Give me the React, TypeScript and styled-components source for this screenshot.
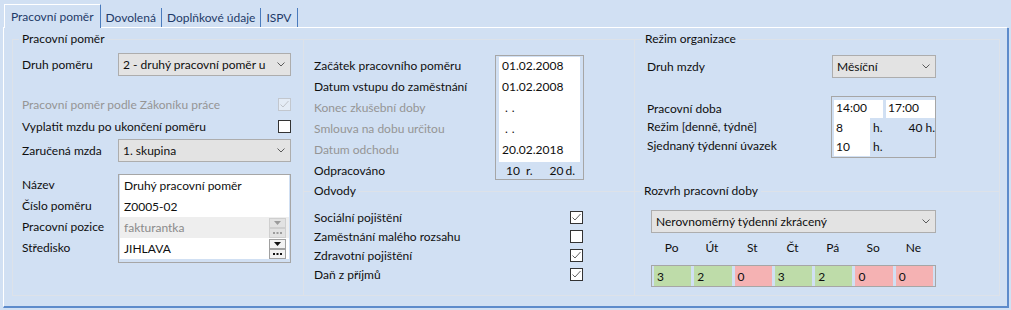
import styled, { createGlobalStyle } from 'styled-components';

const BG = '#d1e0f3';
const LINE = '#dde2e9';
const TAB_BLUE = '#4a7bbd';
const FRAME = '#a6a6a6';
const TEXT = '#0f0f0f';
const MUTED = '#959595';

const GlobalStyle = createGlobalStyle`
  html, body { margin: 0; padding: 0; }
  body {
    background: ${BG};
    font-family: Lato, 'Open Sans', sans-serif;
    font-size: 12px;
    color: ${TEXT};
  }
  * { box-sizing: border-box; }
`;

const Page = styled.div`
  width: 1011px;
  height: 310px;
  overflow: hidden;
  background: ${BG};
`;

const TabBar = styled.div`
  display: flex;
  align-items: flex-end;
  box-sizing: content-box;
  height: 27px;
  width: 1003px;
  margin-left: 3px;
  padding-left: 1px;
  border-bottom: 1px solid #fff;
`;

const Tab = styled.div<{ $active?: boolean }>`
  display: flex;
  align-items: center;
  box-sizing: content-box;
  height: ${(p) => (p.$active ? 23 : 19)}px;
  margin-bottom: ${(p) => (p.$active ? -1 : 0)}px;
  padding: 0 ${(p) => (p.$active ? 6 : 5)}px;
  color: #1e3a68;
  background: ${BG};
  border-right: 1px solid ${TAB_BLUE};
  border-top: ${(p) => (p.$active ? '1px solid #fff' : 'none')};
  border-left: ${(p) => (p.$active ? '1px solid #fff' : 'none')};
  white-space: nowrap;
`;

const Panel = styled.div`
  box-sizing: content-box;
  margin-left: 3px;
  width: 988px;
  height: 257px;
  padding: 11px 7px 10px 8px;
  border-left: 1px solid #fff;
  border-right: 2px solid #5d8bcb;
  border-bottom: 2px solid #5d8bcb;
  display: grid;
  grid-template-columns: 292px 331px 365px;
`;

const Column = styled.div`
  display: flex;
  flex-direction: column;
`;

const Group = styled.div<{ $h: number; $noLeft?: boolean; $noBottom?: boolean }>`
  height: ${(p) => p.$h}px;
  border: 1px solid ${LINE};
  border-left-width: ${(p) => (p.$noLeft ? 0 : 1)}px;
  border-bottom-width: ${(p) => (p.$noBottom ? 0 : 1)}px;
  display: flex;
  flex-direction: column;
`;

const GroupTitle = styled.div<{ $indent: number }>`
  align-self: flex-start;
  margin: -9px 0 0 ${(p) => p.$indent}px;
  padding: 0 3px;
  height: 16px;
  line-height: 16px;
  background: ${BG};
  white-space: nowrap;
`;

const Body = styled.div<{ $pl: number; $pt?: number }>`
  display: flex;
  flex-direction: column;
  padding-left: ${(p) => p.$pl}px;
  padding-top: ${(p) => p.$pt ?? 0}px;
`;

const Row = styled.div<{ $mt?: number; $h: number; $w?: number; $spread?: boolean }>`
  display: flex;
  align-items: center;
  justify-content: ${(p) => (p.$spread ? 'space-between' : 'flex-start')};
  margin-top: ${(p) => p.$mt ?? 0}px;
  height: ${(p) => p.$h}px;
  width: ${(p) => (p.$w ? `${p.$w}px` : 'auto')};
`;

const Split = styled.div<{ $mt?: number }>`
  display: flex;
  align-items: flex-start;
  margin-top: ${(p) => p.$mt ?? 0}px;
`;

const Label = styled.div<{ $w?: number; $muted?: boolean }>`
  width: ${(p) => (p.$w ? `${p.$w}px` : 'auto')};
  flex-shrink: 0;
  white-space: nowrap;
  color: ${(p) => (p.$muted ? MUTED : TEXT)};
`;

const LabelColumn = styled.div<{ $w: number; $pt?: number }>`
  width: ${(p) => p.$w}px;
  flex-shrink: 0;
  padding-top: ${(p) => p.$pt ?? 0}px;
  display: flex;
  flex-direction: column;
`;

const LabelLine = styled.div<{ $h: number; $muted?: boolean }>`
  height: ${(p) => p.$h}px;
  display: flex;
  align-items: center;
  white-space: nowrap;
  color: ${(p) => (p.$muted ? MUTED : TEXT)};
`;

/* combo box */
const SelectBox = styled.div<{ $w: number }>`
  width: ${(p) => p.$w}px;
  height: 23px;
  border: 1px solid #adadad;
  background: #e3e3e3;
  display: flex;
  align-items: center;
  justify-content: space-between;
  padding: 0 5px 0 4px;
  white-space: nowrap;
  overflow: hidden;
`;

const Chevron = () => (
  <svg width="8" height="5" viewBox="0 0 8 5">
    <path d="M0.5 0.5 L4 4 L7.5 0.5" fill="none" stroke="#5a5a5a" strokeWidth="1" />
  </svg>
);

const Select = ({ w, value }: { w: number; value: string }) => (
  <SelectBox $w={w}>
    <span>{value}</span>
    <Chevron />
  </SelectBox>
);

/* checkbox */
const CheckBox = styled.span<{ $disabled?: boolean }>`
  width: 13px;
  height: 13px;
  flex-shrink: 0;
  border: 1px solid ${(p) => (p.$disabled ? '#c2c7ce' : '#333')};
  background: ${(p) => (p.$disabled ? '#e4ecf6' : '#fff')};
  display: inline-flex;
  align-items: center;
  justify-content: center;
`;

const Check = ({ checked, disabled }: { checked?: boolean; disabled?: boolean }) => (
  <CheckBox $disabled={disabled}>
    {checked && (
      <svg width="11" height="11" viewBox="0 0 11 11">
        <path
          d="M1.5 5.5 L4 8 L9.5 2"
          fill="none"
          stroke={disabled ? '#c0c4ca' : '#606060'}
          strokeWidth="1"
        />
      </svg>
    )}
  </CheckBox>
);

/* edit box with lookup buttons */
const FieldBox = styled.div`
  width: 173px;
  border: 1px solid ${FRAME};
  padding: 0 1px 3px 1px;
`;

const Field = styled.div<{ $muted?: boolean }>`
  height: 21px;
  display: flex;
  align-items: center;
  justify-content: space-between;
  padding: 0 3px 0 4px;
  background: ${(p) => (p.$muted ? '#eeeeee' : '#fff')};
  color: ${(p) => (p.$muted ? '#8a8a8a' : TEXT)};
`;

const ButtonStack = styled.div`
  display: flex;
  flex-direction: column;
`;

const MiniButton = styled.span<{ $disabled?: boolean }>`
  width: 17px;
  height: 10px;
  border: 1px solid ${(p) => (p.$disabled ? '#cfcfcf' : '#a0a0a0')};
  background: ${(p) => (p.$disabled ? '#e2e2e2' : '#f2f2f2')};
  display: flex;
  align-items: center;
  justify-content: center;
`;

const LookupButtons = ({ disabled }: { disabled?: boolean }) => {
  const c = disabled ? '#9c9c9c' : '#111';
  return (
    <ButtonStack>
      <MiniButton $disabled={disabled}>
        <svg width="7" height="4" viewBox="0 0 7 4">
          <path d="M0 0 H7 L3.5 4 Z" fill={c} />
        </svg>
      </MiniButton>
      <MiniButton $disabled={disabled}>
        <svg width="9" height="2" viewBox="0 0 9 2">
          <rect x="0" y="0" width="2" height="2" fill={c} />
          <rect x="3.5" y="0" width="2" height="2" fill={c} />
          <rect x="7" y="0" width="2" height="2" fill={c} />
        </svg>
      </MiniButton>
    </ButtonStack>
  );
};

/* dates */
const DateBox = styled.div`
  width: 89px;
  border: 1px solid ${FRAME};
  padding: 1px 3px 0 3px;
`;

const DateCell = styled.div`
  height: 21px;
  background: #fff;
  display: flex;
  align-items: center;
  padding: 0 0 4px 3px;
`;

const DateBlank = styled.span`
  padding-left: 3px;
  letter-spacing: 4px;
`;

const Worked = styled.div`
  height: 17px;
  display: flex;
  align-items: center;
  justify-content: space-between;
  padding: 0 5px 0 7px;
`;

const Unit = styled.span<{ $gap: number }>`
  margin-left: ${(p) => p.$gap}px;
`;

/* working time */
const TimeBox = styled.div`
  width: 105px;
  border: 1px solid ${FRAME};
  padding: 3px 0 1px 2px;
`;

const TimeRow = styled.div<{ $h: number }>`
  display: flex;
  height: ${(p) => p.$h}px;
`;

const TimeCell = styled.div<{ $w: number; $gap?: number; $top?: boolean }>`
  width: ${(p) => p.$w}px;
  margin-left: ${(p) => p.$gap ?? 0}px;
  background: #fff;
  padding-left: 2px;
  display: flex;
  align-items: ${(p) => (p.$top ? 'flex-start' : 'center')};
  line-height: 15px;
`;

const Suffix = styled.div`
  flex: 1;
  display: flex;
  align-items: center;
  justify-content: space-between;
  padding-left: 3px;
`;

/* schedule */
const DayHeader = styled.div`
  width: 285px;
  height: 16px;
  display: grid;
  grid-template-columns: repeat(7, 1fr);
  column-gap: 3px;
  padding: 0 4px 0 2px;
`;

const DayName = styled.div`
  text-align: center;
  line-height: 16px;
`;

const DayBox = styled.div`
  width: 285px;
  height: 22px;
  border: 1px solid ${FRAME};
  padding: 0 2px;
  display: grid;
  grid-template-columns: repeat(7, 1fr);
  column-gap: 3px;
`;

const DayCell = styled.div<{ $off: boolean }>`
  background: ${(p) => (p.$off ? '#f5b2b3' : '#bedca9')};
  padding-left: 3px;
  display: flex;
  align-items: center;
`;

const days = [
  { name: 'Po', hours: 3 },
  { name: 'Út', hours: 2 },
  { name: 'St', hours: 0 },
  { name: 'Čt', hours: 3 },
  { name: 'Pá', hours: 2 },
  { name: 'So', hours: 0 },
  { name: 'Ne', hours: 0 },
];

export default function App() {
  return (
    <>
      <GlobalStyle />
      <Page>
        <TabBar>
          <Tab $active>Pracovní poměr</Tab>
          <Tab>Dovolená</Tab>
          <Tab>Doplňkové údaje</Tab>
          <Tab>ISPV</Tab>
        </TabBar>
        <Panel>
          <Group $h={257}>
            <GroupTitle $indent={6}>Pracovní poměr</GroupTitle>
            <Body $pl={9}>
              <Row $mt={6} $h={23}>
                <Label $w={96}>Druh poměru</Label>
                <Select w={173} value="2 - druhý pracovní poměr u" />
              </Row>
              <Row $mt={17} $h={22} $w={269} $spread>
                <Label $muted>Pracovní poměr podle Zákoníku práce</Label>
                <Check checked disabled />
              </Row>
              <Row $h={22} $w={269} $spread>
                <Label>Vyplatit mzdu po ukončení poměru</Label>
                <Check />
              </Row>
              <Row $mt={2} $h={23}>
                <Label $w={96}>Zaručená mzda</Label>
                <Select w={173} value="1. skupina" />
              </Row>
              <Split $mt={12}>
                <LabelColumn $w={96}>
                  <LabelLine $h={21}>Název</LabelLine>
                  <LabelLine $h={21}>Číslo poměru</LabelLine>
                  <LabelLine $h={21}>Pracovní pozice</LabelLine>
                  <LabelLine $h={21}>Středisko</LabelLine>
                </LabelColumn>
                <FieldBox>
                  <Field>Druhý pracovní poměr</Field>
                  <Field>Z0005-02</Field>
                  <Field $muted>
                    <span>fakturantka</span>
                    <LookupButtons disabled />
                  </Field>
                  <Field>
                    <span>JIHLAVA</span>
                    <LookupButtons />
                  </Field>
                </FieldBox>
              </Split>
            </Body>
          </Group>

          <Column>
            <Group $h={152} $noLeft $noBottom>
              <Body $pl={10} $pt={15}>
                <Split>
                  <LabelColumn $w={181}>
                    <LabelLine $h={21}>Začátek pracovního poměru</LabelLine>
                    <LabelLine $h={21}>Datum vstupu do zaměstnání</LabelLine>
                    <LabelLine $h={21} $muted>Konec zkušební doby</LabelLine>
                    <LabelLine $h={21} $muted>Smlouva na dobu určitou</LabelLine>
                    <LabelLine $h={21} $muted>Datum odchodu</LabelLine>
                    <LabelLine $h={21}>Odpracováno</LabelLine>
                  </LabelColumn>
                  <DateBox>
                    <DateCell>01.02.2008</DateCell>
                    <DateCell>01.02.2008</DateCell>
                    <DateCell><DateBlank>..</DateBlank></DateCell>
                    <DateCell><DateBlank>..</DateBlank></DateCell>
                    <DateCell>20.02.2018</DateCell>
                    <Worked>
                      <span>10<Unit $gap={6}>r.</Unit></span>
                      <span>20<Unit $gap={2}>d.</Unit></span>
                    </Worked>
                  </DateBox>
                </Split>
              </Body>
            </Group>
            <Group $h={105} $noLeft>
              <GroupTitle $indent={7}>Odvody</GroupTitle>
              <Body $pl={10}>
                <Row $mt={9} $h={19} $w={269} $spread>
                  <Label>Sociální pojištění</Label>
                  <Check checked />
                </Row>
                <Row $h={19} $w={269} $spread>
                  <Label>Zaměstnání malého rozsahu</Label>
                  <Check />
                </Row>
                <Row $h={19} $w={269} $spread>
                  <Label>Zdravotní pojištění</Label>
                  <Check checked />
                </Row>
                <Row $h={19} $w={269} $spread>
                  <Label>Daň z příjmů</Label>
                  <Check checked />
                </Row>
              </Body>
            </Group>
          </Column>

          <Column>
            <Group $h={152} $noLeft $noBottom>
              <GroupTitle $indent={7}>Režim organizace</GroupTitle>
              <Body $pl={12}>
                <Row $mt={8} $h={23}>
                  <Label $w={185}>Druh mzdy</Label>
                  <Select w={104} value="Měsíční" />
                </Row>
                <Split $mt={18}>
                  <LabelColumn $w={184} $pt={3}>
                    <LabelLine $h={18.5}>Pracovní doba</LabelLine>
                    <LabelLine $h={18.5}>Režim [denně, týdně]</LabelLine>
                    <LabelLine $h={18.5}>Sjednaný týdenní úvazek</LabelLine>
                  </LabelColumn>
                  <TimeBox>
                    <TimeRow $h={18}>
                      <TimeCell $w={49} $top>14:00</TimeCell>
                      <TimeCell $w={49} $gap={3} $top>17:00</TimeCell>
                    </TimeRow>
                    <TimeRow $h={19}>
                      <TimeCell $w={36}>8</TimeCell>
                      <Suffix>
                        <span>h.</span>
                        <span>40 h.</span>
                      </Suffix>
                    </TimeRow>
                    <TimeRow $h={19}>
                      <TimeCell $w={36}>10</TimeCell>
                      <Suffix>
                        <span>h.</span>
                      </Suffix>
                    </TimeRow>
                  </TimeBox>
                </Split>
              </Body>
            </Group>
            <Group $h={105} $noLeft>
              <GroupTitle $indent={6}>Rozvrh pracovní doby</GroupTitle>
              <Body $pl={16}>
                <Row $mt={11} $h={23}>
                  <Select w={285} value="Nerovnoměrný týdenní zkrácený" />
                </Row>
                <Row $mt={7} $h={16}>
                  <DayHeader>
                    {days.map((d) => (
                      <DayName key={d.name}>{d.name}</DayName>
                    ))}
                  </DayHeader>
                </Row>
                <Row $mt={9} $h={22}>
                  <DayBox>
                    {days.map((d) => (
                      <DayCell key={d.name} $off={d.hours === 0}>
                        {d.hours}
                      </DayCell>
                    ))}
                  </DayBox>
                </Row>
              </Body>
            </Group>
          </Column>
        </Panel>
      </Page>
    </>
  );
}
